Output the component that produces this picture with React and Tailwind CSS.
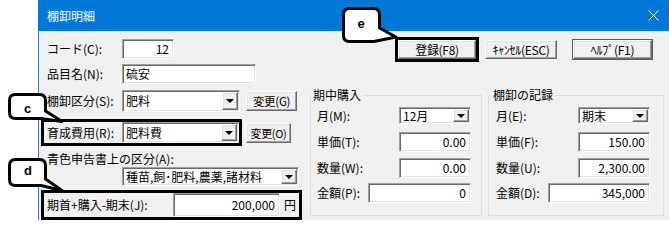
import React from "react";

const SUNK =
  "flex items-center bg-white border border-t-[#a0a0a0] border-l-[#a0a0a0] border-r-white border-b-white shadow-[inset_1px_1px_0_#696969,inset_-1px_-1px_0_#e3e3e3] shrink-0 whitespace-nowrap";
const RAISED =
  "flex items-center justify-center bg-[#f0f0f0] border border-t-white border-l-white border-r-[#696969] border-b-[#696969] shadow-[inset_-1px_-1px_0_#a0a0a0,inset_1px_1px_0_#e3e3e3] shrink-0 whitespace-nowrap leading-[14px] tracking-[-0.3px]";

function Arrow() {
  return (
    <div className={`${RAISED} w-[16px] h-full`}>
      <div className="w-0 h-0 border-l-[4px] border-r-[4px] border-t-[4px] border-l-transparent border-r-transparent border-t-black" />
    </div>
  );
}

function Combo({ cls, text }) {
  return (
    <div className={`${SUNK} p-[1px] ${cls}`}>
      <span className="flex-1 min-w-0 pl-[2px] leading-[14px] whitespace-nowrap">{text}</span>
      <Arrow />
    </div>
  );
}

function Field({ cls, text }) {
  return <div className={`${SUNK} justify-end pr-[4px] leading-[14px] ${cls}`}>{text}</div>;
}

function Btn({ cls, children }) {
  return <div className={`${RAISED} ${cls}`}>{children}</div>;
}

function Row({ cls, label, labelCls, children }) {
  return (
    <div className={`flex items-center ${cls}`}>
      <span className={`shrink-0 whitespace-nowrap leading-[14px] ${labelCls}`}>{label}</span>
      {children}
    </div>
  );
}

function Group({ cls, legendCls, padCls, title, rows }) {
  return (
    <fieldset className={`border border-[#dcdcdc] h-[128px] shrink-0 ${cls}`}>
      <legend className={`px-[2px] leading-[14px] ${legendCls}`}>{title}</legend>
      <div className={`flex flex-col ${padCls}`}>
        <Row cls="h-[17px] mt-[5px]" label={rows[0][0]} labelCls="w-[82px]">
          <Combo cls="w-[72px] h-full" text={rows[0][1]} />
        </Row>
        <Row cls="h-[20px] mt-[8px]" label={rows[1][0]} labelCls="w-[82px]">
          <Field cls="w-[72px] h-full" text={rows[1][1]} />
        </Row>
        <Row cls="h-[20px] mt-[6px]" label={rows[2][0]} labelCls="w-[82px]">
          <Field cls="w-[72px] h-full" text={rows[2][1]} />
        </Row>
        <Row cls="h-[20px] mt-[5px]" label={rows[3][0]} labelCls={rows[3][2]}>
          <Field cls={`h-full ${rows[3][3]}`} text={rows[3][1]} />
        </Row>
      </div>
    </fieldset>
  );
}

export default function App() {
  return (
    <div className="relative w-[669px] h-[220px] overflow-hidden bg-white flex text-[12px] text-black font-['Noto_Sans_CJK_JP','Noto_Sans',sans-serif]">
      <div className="w-[38px] shrink-0" />
      <div className="flex flex-col w-[631px] shrink-0">
        <div className="h-[31px] shrink-0 bg-[#0078d7] flex items-center justify-between pl-[9px] pr-[10px] text-white">
          <span className="leading-[14px]">棚卸明細</span>
          <svg width="11" height="11" viewBox="0 0 11 11">
            <path d="M0.5 0.5 L10.5 10.5 M10.5 0.5 L0.5 10.5" stroke="white" strokeWidth="1" fill="none" />
          </svg>
        </div>
        <div className="flex-1 flex bg-[#f0f0f0] border-l border-[#1a84d9]">
          {/* left column */}
          <div className="w-[266px] shrink-0 flex flex-col pt-[8px]">
            <Row cls="h-[20px]" label="コード(C):" labelCls="w-[83px] pl-[8px]">
              <Field cls="w-[52px] h-full" text="12" />
            </Row>
            <Row cls="h-[20px] mt-[5px]" label="品目名(N):" labelCls="w-[83px] pl-[8px]">
              <div className={`${SUNK} w-[134px] h-full pl-[3px] leading-[14px]`}>硫安</div>
            </Row>
            <Row cls="h-[22px] mt-[6px]" label="棚卸区分(S):" labelCls="w-[83px] pl-[8px]">
              <Combo cls="w-[118px] h-full" text="肥料" />
              <Btn cls="ml-[6px] w-[51px] h-[20px] text-[11.5px]">変更(G)</Btn>
            </Row>
            <div className="flex items-center h-[27px] mt-[7px]">
              <div className="ml-[2px] w-[201px] h-full border-[3px] border-black flex items-center shrink-0">
                <span className="w-[78px] pl-[3px] shrink-0 whitespace-nowrap leading-[14px]">育成費用(R):</span>
                <Combo cls="w-[117px] h-full" text="肥料費" />
              </div>
              <Btn cls="ml-[4px] w-[45px] h-[20px] text-[11px]">変更(O)</Btn>
            </div>
            <div className="h-[21px] pt-[5px] flex items-center pl-[8px] leading-[14px] whitespace-nowrap">
              青色申告書上の区分(A):
            </div>
            <div className="h-[19px] pl-[83px] flex">
              <Combo cls="w-[177px] h-full" text="種苗,飼･肥料,農薬,諸材料" />
            </div>
            <div className="mt-[4px] ml-[2px] w-[261px] h-[30px] border-[3px] border-black flex items-center">
              <span className="w-[129px] pl-[3px] shrink-0 whitespace-nowrap leading-[14px]">期首+購入-期末(J):</span>
              <Field cls="w-[107px] h-full" text="200,000" />
              <span className="ml-[4px] leading-[14px]">円</span>
            </div>
          </div>

          {/* right column */}
          <div className="flex-1 flex flex-col pt-[6px]">
            <div className="flex items-center h-[25px]">
              <div className="ml-[90px] w-[84px] h-full border-[3px] border-black flex shrink-0">
                <Btn cls="w-full h-full">登録(F8)</Btn>
              </div>
              <Btn cls="ml-[6px] w-[72px] h-[19px]">ｷｬﾝｾﾙ(ESC)</Btn>
              <div className="ml-[15px] w-[81px] h-[21px] border border-[#5a5a5a] flex shrink-0">
                <Btn cls="w-full h-full">ﾍﾙﾌﾟ(F1)</Btn>
              </div>
            </div>
            <div className="flex mt-[26px]">
              <Group
                cls="ml-[5px] w-[172px]"
                legendCls="ml-0"
                padCls="pl-[6px]"
                title="期中購入"
                rows={[
                  ["月(M):", "12月"],
                  ["単価(T):", "0.00"],
                  ["数量(W):", "0.00"],
                  ["金額(P):", "0", "w-[51px]", "w-[103px]"],
                ]}
              />
              <Group
                cls="ml-[6px] w-[176px]"
                legendCls="ml-[2px]"
                padCls="pl-[7px]"
                title="棚卸の記録"
                rows={[
                  ["月(E):", "期末"],
                  ["単価(F):", "150.00"],
                  ["数量(U):", "2,300.00"],
                  ["金額(D):", "345,000", "w-[52px]", "w-[102px]"],
                ]}
              />
            </div>
          </div>
        </div>
      </div>

      {/* callouts overlay */}
      <svg className="absolute left-0 top-0 pointer-events-none" width="669" height="220" viewBox="0 0 669 220">
        <g fill="white" stroke="black" strokeWidth="3" strokeLinejoin="round">
          <path d="M15.5 94.5 H39.5 Q45.5 94.5 45.5 100.5 V111 L62 121.5 L41 118.5 H15.5 Q9.5 118.5 9.5 112.5 V100.5 Q9.5 94.5 15.5 94.5 Z" />
          <path d="M15.5 159.5 H39.5 Q45.5 159.5 45.5 165.5 V179 L62 190.5 L41 185.5 H15.5 Q9.5 185.5 9.5 179.5 V165.5 Q9.5 159.5 15.5 159.5 Z" />
          <path d="M349.5 8.5 H373.5 Q379.5 8.5 379.5 14.5 V28 L396 37 L374 41.5 H349.5 Q343.5 41.5 343.5 35.5 V14.5 Q343.5 8.5 349.5 8.5 Z" />
        </g>
        <g fontFamily="'Liberation Sans', Arial, sans-serif" fontWeight="700" fontSize="13" textAnchor="middle" fill="black">
          <text x="27.5" y="113">c</text>
          <text x="28" y="175">d</text>
          <text x="361" y="27.5">e</text>
        </g>
      </svg>
    </div>
  );
}
